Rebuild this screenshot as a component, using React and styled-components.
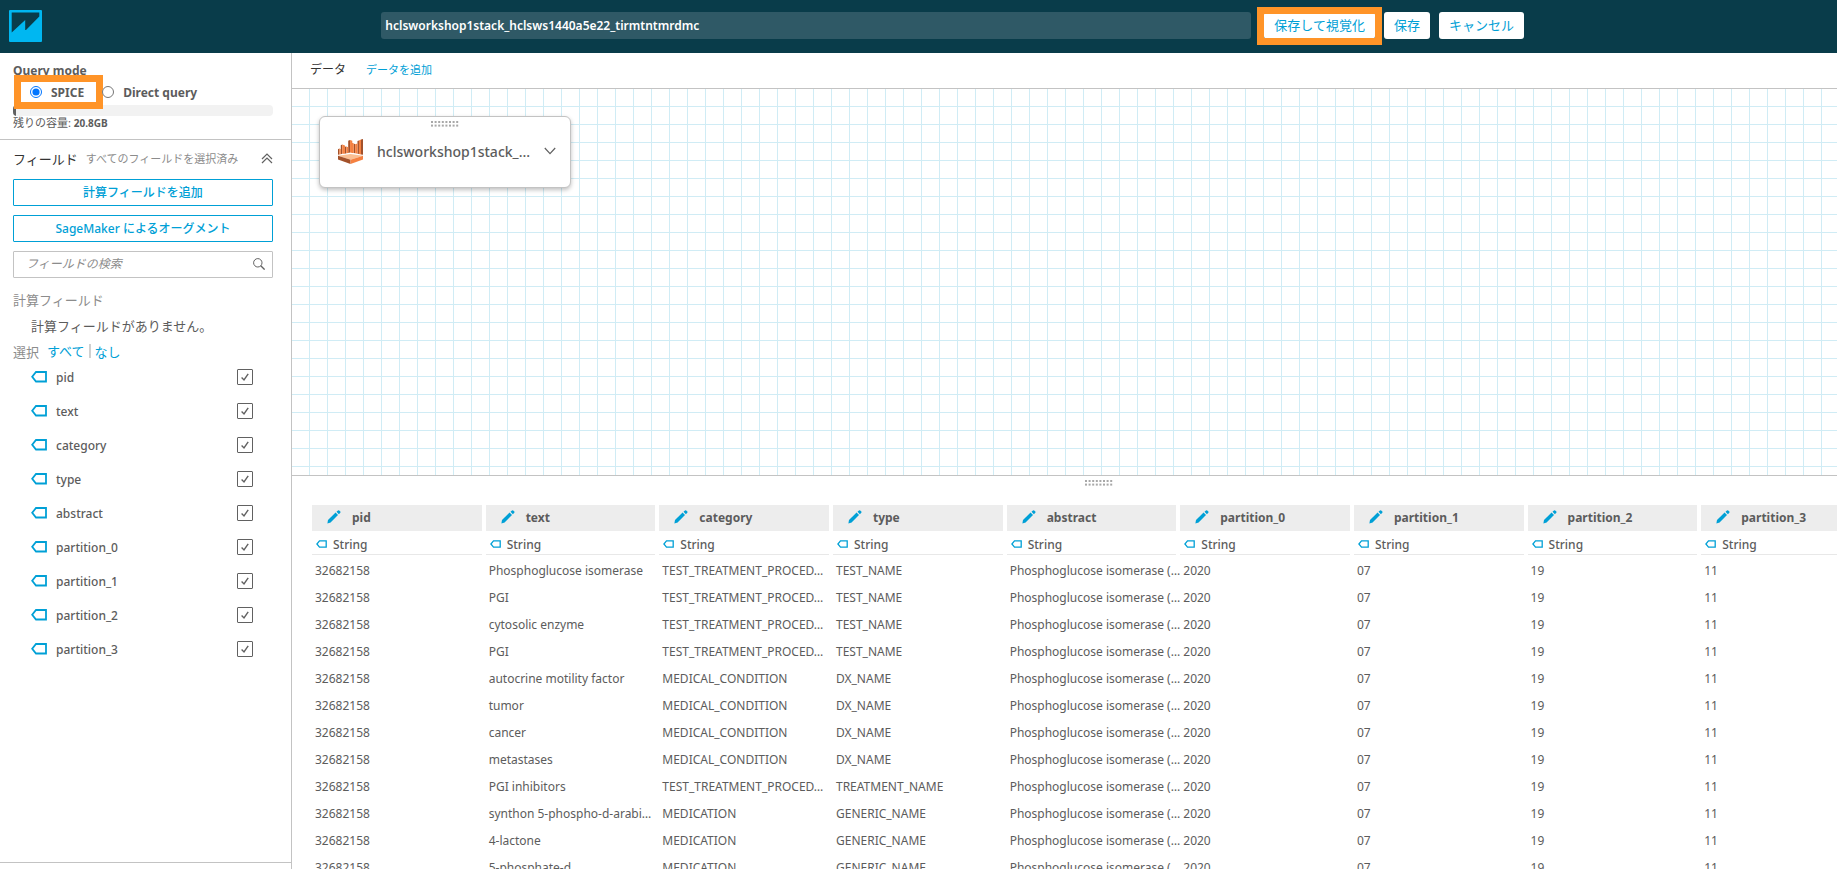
import React, { useState } from 'react'
import styled, { createGlobalStyle } from 'styled-components';


const GlobalStyle = createGlobalStyle`
* {
  box-sizing: border-box;
}

body {
  margin: 0;
  overflow: hidden;
  background: #fff;
  color: #5c5c5c;
  font-family: "Noto Sans", "Noto Sans CJK JP", sans-serif;
  font-size: 13px;
}

button, input {
  font-family: inherit;
  font-size: inherit;
}

a {
  color: #00a0d6;
  text-decoration: none;
}
`;

const fields = [
  'pid',
  'text',
  'category',
  'type',
  'abstract',
  'partition_0',
  'partition_1',
  'partition_2',
  'partition_3',
];

const entities = [
  ['Phosphoglucose isomerase', 'TEST_TREATMENT_PROCED…', 'TEST_NAME'],
  ['PGI', 'TEST_TREATMENT_PROCED…', 'TEST_NAME'],
  ['cytosolic enzyme', 'TEST_TREATMENT_PROCED…', 'TEST_NAME'],
  ['PGI', 'TEST_TREATMENT_PROCED…', 'TEST_NAME'],
  ['autocrine motility factor', 'MEDICAL_CONDITION', 'DX_NAME'],
  ['tumor', 'MEDICAL_CONDITION', 'DX_NAME'],
  ['cancer', 'MEDICAL_CONDITION', 'DX_NAME'],
  ['metastases', 'MEDICAL_CONDITION', 'DX_NAME'],
  ['PGI inhibitors', 'TEST_TREATMENT_PROCED…', 'TREATMENT_NAME'],
  ['synthon 5-phospho-d-arabi…', 'MEDICATION', 'GENERIC_NAME'],
  ['4-lactone', 'MEDICATION', 'GENERIC_NAME'],
  ['5-phosphate-d', 'MEDICATION', 'GENERIC_NAME'],
];

const rows = entities.map(([text, category, type]) => [
  '32682158',
  text,
  category,
  type,
  'Phosphoglucose isomerase (…',
  '2020',
  '07',
  '19',
  '11',
]);


const Page = styled.div`
  display: flex;
  flex-direction: column;
  height: 100vh;
`;

const Header = styled.header`
  display: flex;
  align-items: center;
  flex: none;
  height: 53px;
  padding: 0 9px 2px;
  background: #093c4a;
`;

const LogoLink = styled.a`
  display: flex;
  flex: none;
  margin-right: auto;
`;

const TitleInput = styled.input`
  flex: 0 1 870px;
  min-width: 200px;
  height: 27px;
  padding: 0 4px;
  border: 0;
  border-radius: 3px;
  background: #2f5966;
  color: #fff;
  font-size: 12px;
  font-weight: 600;
`;

const HeaderActions = styled.div`
  display: flex;
  flex: none;
  gap: 9px;
  margin-left: 13px;
  margin-right: 304px;
`;

const HeaderButton = styled.button`
  position: relative;
  height: 27px;
  padding: 0 10px 2px;
  border: 0;
  border-radius: 3px;
  background: #fff;
  color: #00a0d6;
  white-space: nowrap;
`;

const Highlight = styled.span`
  position: absolute;
  inset: ${(props) => props.$inset};
  border: 7px solid #ff9428;
  pointer-events: none;
`;

const Body = styled.div`
  display: flex;
  flex: 1;
  min-height: 0;
`;

const Sidebar = styled.aside`
  display: flex;
  flex-direction: column;
  flex: none;
  width: 292px;
  border-right: 1px solid #c3c3c3;
`;

const QueryMode = styled.fieldset`
  margin: 0;
  padding: 10px 18px 9px 13px;
  border: 0;
  border-bottom: 1px solid #c3c3c3;

  legend {
    float: left;
    width: 100%;
    padding: 0;
    line-height: 16px;
    font-size: 12px;
    font-weight: 700;
  }
`;

const RadioRow = styled.div`
  display: flex;
  clear: both;
  height: 26px;
  padding-left: 17px;
  gap: 18px;
`;

const RadioLabel = styled.label`
  position: relative;
  display: flex;
  align-items: center;
  height: 26px;
  font-size: 12px;
  font-weight: 700;

  input {
    width: 12px;
    height: 12px;
    margin: 0 9px 0 0;
  }
`;

const Meter = styled.div`
  height: 11px;
  border-radius: 4px;
  background: #f2f2f2;
  overflow: hidden;

  span {
    display: block;
    width: 1%;
    height: 100%;
    background: #616161;
  }
`;

const Capacity = styled.div`
  height: 14px;
  line-height: 14px;
  font-size: 11px;

  b {
    font-size: 10px;
  }
`;

const FieldPanel = styled.section`
  flex: 1;
  min-height: 0;
  padding: 0 18px 0 13px;
  overflow: hidden;
`;

const FieldHeader = styled.div`
  display: flex;
  align-items: center;
  height: 36px;
  margin-bottom: 3px;

  h2 {
    margin: 0 8px 0 0;
    color: #333;
    font-size: 13px;
    font-weight: 400;
  }

  span {
    color: #8c8c8c;
    font-size: 11px;
    white-space: nowrap;
  }
`;

const IconButton = styled.button`
  display: flex;
  margin-left: auto;
  padding: 0;
  border: 0;
  background: none;
  color: #616161;
`;

const OutlineButton = styled.button`
  display: block;
  width: 100%;
  height: 27px;
  margin-bottom: 9px;
  padding: 0 0 2px;
  border: 1px solid #00a0d6;
  border-radius: 1px;
  background: #fff;
  color: #00a0d6;
  font-size: 12px;
  font-weight: 500;
`;

const SearchBox = styled.label`
  display: flex;
  align-items: center;
  height: 27px;
  padding: 0 7px 2px 12px;
  border: 1px solid #c3c3c3;
  border-radius: 1px;

  input {
    flex: 1;
    min-width: 0;
    padding: 0;
    border: 0;
    outline: 0;
    font-size: 12px;
    font-style: italic;
  }

  input::placeholder {
    color: #8c8c8c;
  }
`;

const FieldLine = styled.div`
  display: flex;
  align-items: center;
  height: 14px;
  margin-top: ${(props) => (props.$first ? '14px' : '12px')};
  padding-left: ${(props) => (props.$indent ? '18px' : '0')};
  color: ${(props) => (props.$indent ? '#5c5c5c' : '#8c8c8c')};

  a:first-of-type {
    margin-left: 8px;
    padding-right: 4px;
    border-right: 2px solid #d0d0d0;
    line-height: 14px;
  }

  a:last-of-type {
    margin-left: 4px;
  }
`;

const FieldList = styled.ul`
  margin: 2px 0 0;
  padding: 0 20px 0 18px;
  list-style: none;
`;

const FieldItem = styled.li`
  label {
    display: flex;
    align-items: center;
    height: 34px;
    gap: 9px;
    font-size: 12px;
    font-weight: 500;
  }
`;

const Tick = styled.span`
  display: grid;
  margin-left: auto;

  input {
    grid-area: 1 / 1;
    appearance: none;
    width: 16px;
    height: 16px;
    margin: 0;
    border: 1px solid #616161;
    border-radius: 1px;
  }

  svg {
    grid-area: 1 / 1;
    pointer-events: none;
  }

  input:not(:checked) + svg {
    visibility: hidden;
  }
`;

const SidebarFooter = styled.div`
  flex: none;
  height: 7px;
  border-top: 1px solid #c3c3c3;
`;

const Main = styled.main`
  display: flex;
  flex-direction: column;
  flex: 1;
  min-width: 0;
`;

const DataBar = styled.div`
  display: flex;
  align-items: center;
  flex: none;
  height: 36px;
  padding: 0 18px 4px;
  gap: 20px;
  border-bottom: 1px solid #c3c3c3;

  h1 {
    margin: 0;
    color: #333;
    font-size: 12px;
    font-weight: 400;
  }

  a {
    font-size: 11px;
  }
`;

const Canvas = styled.div`
  flex: 1 1 55px;
  min-height: 0;
  padding: 27px;
  border-bottom: 1px solid #c3c3c3;
  background-image:
    linear-gradient(to right, transparent 17px, #d0ecf5 17px),
    linear-gradient(to bottom, transparent 17px, #d0ecf5 17px);
  background-size: 18px 18px;
`;

const SourceCard = styled.article`
  display: flex;
  flex-direction: column;
  align-items: center;
  width: 252px;
  height: 72px;
  padding-top: 4px;
  border: 1px solid #c3c3c3;
  border-radius: 6px;
  background: #fff;
  box-shadow: 0 2px 4px rgba(0, 0, 0, 0.25);
`;

const SourceRow = styled.div`
  display: flex;
  align-items: center;
  width: 100%;
  height: 50px;
  padding: 0 14px 2px 18px;
  gap: 14px;
  font-size: 14px;
  font-weight: 500;
`;

const Preview = styled.section`
  flex: 1 1 61px;
  min-height: 0;
  overflow: hidden;
`;

const Splitter = styled.div`
  display: flex;
  justify-content: center;
  height: 29px;
  padding: 4px 0 0 68px;
`;

const DataTable = styled.table`
  width: 100%;
  min-width: 1563px;
  margin-left: 20px;
  border-collapse: collapse;
  table-layout: fixed;

  th, td {
    padding: 0 4px 0 0;
    text-align: left;
  }

  td {
    height: 27px;
    padding-left: 3px;
    font-size: 12px;
    white-space: nowrap;
    overflow: hidden;
  }
`;

const ColumnName = styled.div`
  display: flex;
  align-items: center;
  height: 26px;
  padding: 0 0 2px 15px;
  gap: 11px;
  background: #ededed;
  font-size: 12px;
  font-weight: 700;
`;

const ColumnType = styled.div`
  display: flex;
  align-items: center;
  height: 24px;
  margin-bottom: 2px;
  padding: 3px 0 0 4px;
  gap: 6px;
  border-bottom: 1px solid #e8e8e8;
  font-size: 12px;
  font-weight: 500;
`;


function Logo() {
  return (
    <svg width="33" height="32" viewBox="0 0 33 32">
      <rect width="33" height="32" rx="1" fill="#00b7f1" />
      <path d="M2.7 2.5H30.3V6.5L17 20H16.2V10L2.7 22.5Z" fill="#093c4a" />
    </svg>
  )
}

function TagIcon({ small }) {
  return (
    <svg width={small ? 11 : 16} height={small ? 8 : 12} viewBox={small ? '0 0 11 8' : '0 0 16 12'} fill="none" stroke="#00a0d6">
      {small
        ? <path d="M3.5 .8H10.2V7.2H3.5L.9 4Z" strokeWidth="1.3" />
        : <path d="M5 1H15V10.5H5L1.2 5.8Z" strokeWidth="1.8" />}
    </svg>
  )
}

function PencilIcon() {
  return (
    <svg width="14" height="14" viewBox="0 0 14 14" fill="#00a0d6">
      <path d="M1 10 8.6 2.6 11 5 3.6 12.6 0.4 13.4Z" />
      <path d="M9.5 1.8 11 .4Q11.6 0 12.2 .5L13.3 1.6Q13.8 2.2 13.3 2.8L11.9 4.2Z" />
    </svg>
  )
}

function Grip() {
  return (
    <svg width="28" height="6" viewBox="0 0 28 6" fill="#a8a8a8">
      {[0, 1, 2, 3, 4, 5, 6, 7].map((i) => (
        <React.Fragment key={i}>
          <rect x={i * 3.6} width="2" height="2" />
          <rect x={i * 3.6} y="3.6" width="2" height="2" />
        </React.Fragment>
      ))}
    </svg>
  )
}

function SourceIcon() {
  return (
    <svg width="27" height="27" viewBox="0 0 27 27">
      <path d="M0 11 1.5 10.4V16.6L0 17ZM3 6.8 4.6 6V16L3 16.4ZM7.5 8.4 9 8V15.4L7.5 15.8ZM11 1.8 13 1V14.6L11 15ZM17 5 18.5 5.6V15.4L17 15ZM21 2.2 22.6 1.6V16.2L21 15.8ZM24.8 .6 27 0V17L24.8 16.6Z" fill="#a3512a" />
      <path d="M1.5 10.4 3 11V16.4L1.5 16.6ZM4.6 6 7.5 7V15.8L4.6 16ZM9 8 11 8.8V15L9 15.4ZM13 1 15.4 1.8V15L13 14.6ZM15.4 4 17 5V15L15.4 15ZM18.5 5.6 21 5V15.8L18.5 15.4ZM22.6 1.6 24.8 .6V16.6L22.6 16.2Z" fill="#f58141" />
      <path d="M0 18.2 13.5 16.2 27 18.2 13.5 22.4Z" fill="#fbbf93" />
      <path d="M0 18.2 13.5 22.4V27L0 22Z" fill="#a3512a" />
      <path d="M27 18.2 13.5 22.4V27L27 22Z" fill="#f58141" />
    </svg>
  )
}

function QueryModePanel() {
  return (
    <QueryMode>
      <legend>Query mode</legend>
      <RadioRow>
        <RadioLabel>
          <input type="radio" name="mode" defaultChecked />
          SPICE
          <Highlight $inset="-4px -19px -4px -16px" />
        </RadioLabel>
        <RadioLabel>
          <input type="radio" name="mode" />
          Direct query
        </RadioLabel>
      </RadioRow>
      <Meter><span /></Meter>
      <Capacity>残りの容量: <b>20.8GB</b></Capacity>
    </QueryMode>
  )
}

function FieldsPanel() {
  const [checked, setChecked] = useState(fields)

  const toggle = (name) => {
    setChecked(checked.includes(name) ? checked.filter((f) => f !== name) : [...checked, name])
  }

  return (
    <FieldPanel>
      <FieldHeader>
        <h2>フィールド</h2>
        <span>すべてのフィールドを選択済み</span>
        <IconButton aria-label="折りたたむ">
          <svg width="12" height="11" viewBox="0 0 12 11" fill="none" stroke="currentColor" strokeWidth="1.2">
            <path d="M1 6 6 1 11 6M1 10 6 5 11 10" />
          </svg>
        </IconButton>
      </FieldHeader>
      <OutlineButton>計算フィールドを追加</OutlineButton>
      <OutlineButton>SageMaker によるオーグメント</OutlineButton>
      <SearchBox>
        <input type="text" placeholder="フィールドの検索" aria-label="フィールドの検索" />
        <svg width="12" height="12" viewBox="0 0 12 12" fill="none" stroke="#616161">
          <circle cx="4.8" cy="4.8" r="4.2" />
          <path d="M7.8 7.8 11.6 11.6" strokeWidth="1.3" />
        </svg>
      </SearchBox>
      <FieldLine $first>計算フィールド</FieldLine>
      <FieldLine $indent>計算フィールドがありません。</FieldLine>
      <FieldLine>
        選択
        <a href="#all" onClick={() => setChecked(fields)}>すべて</a>
        <a href="#none" onClick={() => setChecked([])}>なし</a>
      </FieldLine>
      <FieldList>
        {fields.map((name) => (
          <FieldItem key={name}>
            <label>
              <TagIcon />
              {name}
              <Tick>
                <input type="checkbox" checked={checked.includes(name)} onChange={() => toggle(name)} />
                <svg width="16" height="16" viewBox="0 0 16 16" fill="none" stroke="#616161" strokeWidth="1.4">
                  <path d="M4.6 8.6 7 11 11.2 4.8" />
                </svg>
              </Tick>
            </label>
          </FieldItem>
        ))}
      </FieldList>
    </FieldPanel>
  )
}

function PreviewTable() {
  return (
    <DataTable>
      <thead>
        <tr>
          {fields.map((name) => (
            <th key={name}>
              <ColumnName><PencilIcon />{name}</ColumnName>
              <ColumnType><TagIcon small />String</ColumnType>
            </th>
          ))}
        </tr>
      </thead>
      <tbody>
        {rows.map((row, i) => (
          <tr key={i}>
            {row.map((value, j) => <td key={j}>{value}</td>)}
          </tr>
        ))}
      </tbody>
    </DataTable>
  )
}

function App() {
  return (
    <Page>
      <GlobalStyle />
      <Header>
        <LogoLink href="#home" aria-label="ホーム"><Logo /></LogoLink>
        <TitleInput aria-label="データセット名" defaultValue="hclsworkshop1stack_hclsws1440a5e22_tirmtntmrdmc" />
        <HeaderActions>
          <HeaderButton>
            保存して視覚化
            <Highlight $inset="-5px -7px -6px -7px" />
          </HeaderButton>
          <HeaderButton>保存</HeaderButton>
          <HeaderButton>キャンセル</HeaderButton>
        </HeaderActions>
      </Header>
      <Body>
        <Sidebar>
          <QueryModePanel />
          <FieldsPanel />
          <SidebarFooter />
        </Sidebar>
        <Main>
          <DataBar>
            <h1>データ</h1>
            <a href="#add">データを追加</a>
          </DataBar>
          <Canvas>
            <SourceCard>
              <Grip />
              <SourceRow>
                <SourceIcon />
                hclsworkshop1stack_…
                <IconButton aria-label="メニュー">
                  <svg width="12" height="8" viewBox="0 0 12 8" fill="none" stroke="currentColor" strokeWidth="1.2">
                    <path d="M.8 1 6 6.6 11.2 1" />
                  </svg>
                </IconButton>
              </SourceRow>
            </SourceCard>
          </Canvas>
          <Preview>
            <Splitter><Grip /></Splitter>
            <PreviewTable />
          </Preview>
        </Main>
      </Body>
    </Page>
  )
}

export default App
